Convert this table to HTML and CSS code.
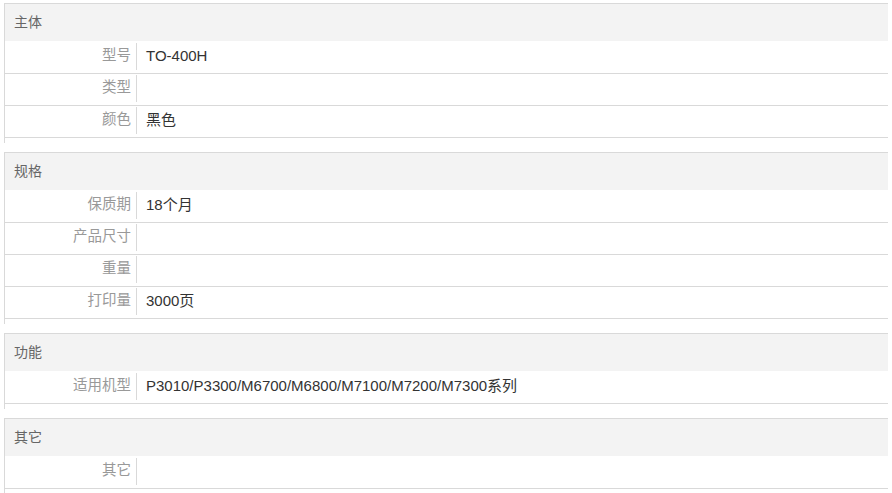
FILE: index.html
```html
<!DOCTYPE html>
<html lang="zh-CN">
<head>
<meta charset="utf-8">
<title>规格参数</title>
<link rel="stylesheet" href="styles.css">
</head>
<body>
<div class="specs">
  <section class="group">
    <h3 class="group-title">主体</h3>
    <dl class="row"><dt class="label">型号</dt><dd class="value">TO-400H</dd></dl>
    <dl class="row"><dt class="label">类型</dt><dd class="value"></dd></dl>
    <dl class="row"><dt class="label">颜色</dt><dd class="value">黑色</dd></dl>
  </section>
  <section class="group">
    <h3 class="group-title">规格</h3>
    <dl class="row"><dt class="label">保质期</dt><dd class="value">18个月</dd></dl>
    <dl class="row"><dt class="label">产品尺寸</dt><dd class="value"></dd></dl>
    <dl class="row"><dt class="label">重量</dt><dd class="value"></dd></dl>
    <dl class="row"><dt class="label">打印量</dt><dd class="value">3000页</dd></dl>
  </section>
  <section class="group">
    <h3 class="group-title">功能</h3>
    <dl class="row"><dt class="label">适用机型</dt><dd class="value">P3010/P3300/M6700/M6800/M7100/M7200/M7300系列</dd></dl>
  </section>
  <section class="group">
    <h3 class="group-title">其它</h3>
    <dl class="row"><dt class="label">其它</dt><dd class="value"></dd></dl>
  </section>
</div>
</body>
</html>
```
FILE: styles.css
```css
html, body {
  margin: 0;
  padding: 0;
  background: #fff;
}
body {
  padding: 3px 4px;
  font-family: "Liberation Sans", "Noto Sans CJK SC", sans-serif;
  font-size: 15px;
}
.specs {
  display: flex;
  flex-direction: column;
  gap: 9px;
}
.group {
  border-top: 1px solid #d9d9d9;
  border-left: 1px solid #d9d9d9;
  padding-bottom: 5px;
}
.group-title {
  margin: 0;
  height: 37px;
  line-height: 36px;
  padding-left: 9px;
  border-bottom: 1px solid #fff;
  background: #f3f3f3;
  font-size: 14px;
  font-weight: normal;
  color: #666;
}
.row {
  display: flex;
  margin: 0;
  height: 31px;
  border-bottom: 1px solid #d9d9d9;
}
.label {
  width: 126px;
  padding: 0 5px 2px 0;
  margin-top: 1px;
  height: 25px;
  line-height: 25px;
  font-size: 14.5px;
  text-align: right;
  color: #999;
  border-right: 1px solid #d9d9d9;
}
.value {
  margin: 1px 0 0;
  padding: 0 0 2px 9px;
  height: 25px;
  line-height: 25px;
  color: #333;
}
```
